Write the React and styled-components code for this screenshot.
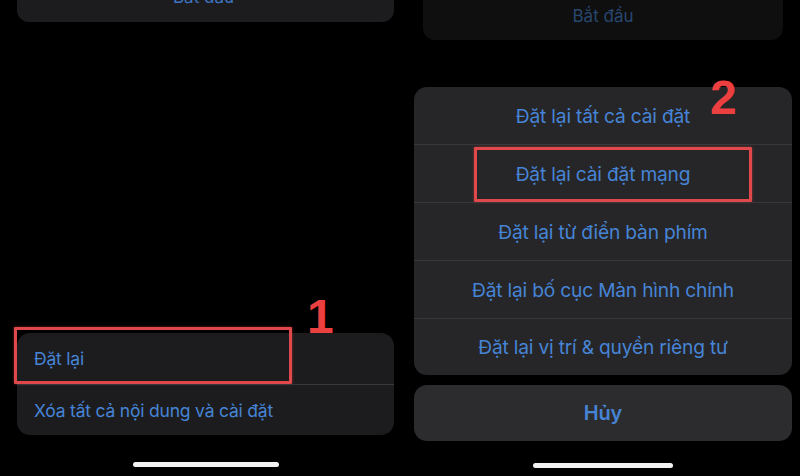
import React from 'react';
import styled, { createGlobalStyle } from 'styled-components';

const GlobalStyle = createGlobalStyle`
  html, body {
    margin: 0;
    padding: 0;
    background: #000;
  }
  body {
    font-family: Inter, 'Noto Sans', 'DejaVu Sans', sans-serif;
    -webkit-font-smoothing: antialiased;
  }
`;

const Screen = styled.div`
  width: 800px;
  height: 476px;
  display: grid;
  grid-template-columns: 400px 400px;
  background: #000;
  overflow: hidden;
`;

const Phone = styled.div`
  display: flex;
  flex-direction: column;
  height: 476px;
  box-sizing: border-box;
`;

const TopCard = styled.div`
  height: ${p => p.$h}px;
  margin: 0 ${p => p.$mr}px 0 ${p => p.$ml}px;
  background: ${p => (p.$dim ? '#0f0f10' : '#1c1c1e')};
  border-radius: 0 0 12px 12px;
  display: flex;
  align-items: flex-end;
  justify-content: center;
  overflow: hidden;
  flex-shrink: 0;
`;

const TopLabel = styled.span`
  font-size: 17px;
  line-height: 20px;
  color: ${p => (p.$dim ? '#28476f' : '#3d74c2')};
  padding-bottom: ${p => p.$pb}px;
  margin-left: ${p => p.$shift || 0}px;
`;

const Spacer = styled.div`
  flex: 1;
`;

const Group = styled.div`
  background: ${p => p.$bg || '#1c1c1e'};
  border-radius: 13px;
  margin: ${p => p.$margin};
  flex-shrink: 0;
`;

const Row = styled.div`
  position: relative;
  box-sizing: border-box;
  height: ${p => p.$h}px;
  display: flex;
  align-items: center;
  justify-content: ${p => (p.$left ? 'flex-start' : 'center')};
  padding-left: ${p => (p.$left ? '17px' : '0')};
  font-size: ${p => p.$size || 17.5}px;
  letter-spacing: -0.2px;
  color: #4684d6;
  font-weight: ${p => (p.$bold ? 600 : 400)};
  & + & {
    border-top: 1px solid #38383b;
  }
`;

const Highlight = styled.div`
  position: absolute;
  left: ${p => p.$x}px;
  top: ${p => p.$y}px;
  width: ${p => p.$w}px;
  height: ${p => p.$h}px;
  box-sizing: border-box;
  border: 3px solid #e0484b;
  border-radius: 1px;
  box-shadow: 0 0 3px rgba(224, 72, 75, 0.5);
  pointer-events: none;
`;

const StepNumber = styled.span`
  position: absolute;
  left: ${p => p.$x}px;
  top: ${p => p.$y}px;
  font-family: 'Liberation Sans', Arial, sans-serif;
  font-weight: 700;
  font-size: 48px;
  line-height: 48px;
  color: #ec3f3f;
`;

const HomeBar = styled.div`
  width: ${p => p.$w}px;
  height: 5px;
  border-radius: 3px;
  background: #f2f2f2;
  margin: ${p => p.$margin};
  flex-shrink: 0;
`;

export default function App() {
  return (
    <>
      <GlobalStyle />
      <Screen>
        <Phone>
          <TopCard $h={22} $ml={17} $mr={6}>
            <TopLabel $pb={15} $shift={-4}>Bắt đầu</TopLabel>
          </TopCard>
          <Spacer />
          <Group $margin="0 6px 0 17px">
            <Row $h={51} $left>
              Đặt lại
              <Highlight $x={-3} $y={-6} $w={278} $h={57} />
              <StepNumber $x={290} $y={-40}>1</StepNumber>
            </Row>
            <Row $h={51} $left>Xóa tất cả nội dung và cài đặt</Row>
          </Group>
          <HomeBar $w={146} $margin="27px 0 9px 133px" />
        </Phone>

        <Phone>
          <TopCard $h={40} $ml={23} $mr={17} $dim>
            <TopLabel $dim $pb={14}>Bắt đầu</TopLabel>
          </TopCard>
          <Group $bg="#262628" $margin="47px 8px 0 14px">
            <Row $h={57} $size={19.2}>
              Đặt lại tất cả cài đặt
              <StepNumber $x={296} $y={-13}>2</StepNumber>
            </Row>
            <Row $h={58} $size={19.2}>
              Đặt lại cài đặt mạng
              <Highlight $x={60} $y={2} $w={278} $h={55} />
            </Row>
            <Row $h={58} $size={19.2}>Đặt lại từ điển bàn phím</Row>
            <Row $h={58} $size={19.2}>Đặt lại bố cục Màn hình chính</Row>
            <Row $h={57} $size={19.2}>Đặt lại vị trí &amp; quyền riêng tư</Row>
          </Group>
          <Group $bg="#2c2c2e" $margin="10px 8px 0 14px">
            <Row $h={56} $size={20} $bold>Hủy</Row>
          </Group>
          <HomeBar $w={140} $margin="22px 0 0 133px" />
        </Phone>
      </Screen>
    </>
  );
}
